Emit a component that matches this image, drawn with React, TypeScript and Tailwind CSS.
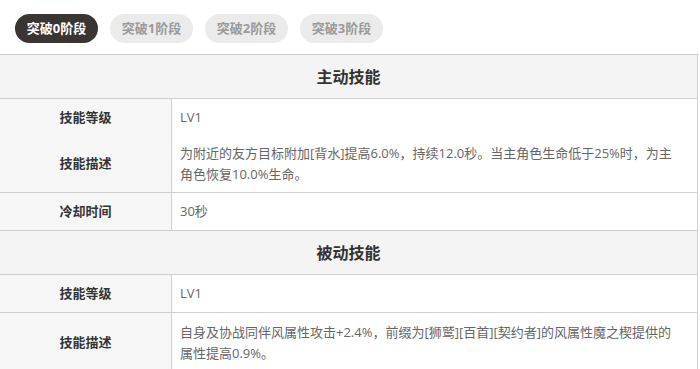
import { useState } from 'react';

const stages = ['突破0阶段', '突破1阶段', '突破2阶段', '突破3阶段'];

interface Row {
  label: string;
  lines: string[];
  border: boolean;
  h: string;
}

interface Section {
  title: string;
  rows: Row[];
}

const sections: Section[] = [
  {
    title: '主动技能',
    rows: [
      { label: '技能等级', lines: ['LV1'], border: false, h: 'h-[37px]' },
      {
        label: '技能描述',
        lines: ['为附近的友方目标附加[背水]提高6.0%，持续12.0秒。当主角色生命低于25%时，为主', '角色恢复10.0%生命。'],
        border: true,
        h: 'h-[57px]',
      },
      { label: '冷却时间', lines: ['30秒'], border: true, h: 'h-[38px]' },
    ],
  },
  {
    title: '被动技能',
    rows: [
      { label: '技能等级', lines: ['LV1'], border: true, h: 'h-[38px]' },
      {
        label: '技能描述',
        lines: ['自身及协战同伴风属性攻击+2.4%，前缀为[狮鹫][百首][契约者]的风属性魔之楔提供的', '属性提高0.9%。'],
        border: true,
        h: 'h-[61px]',
      },
    ],
  },
];

const App = () => {
  const [active, setActive] = useState(0);

  return (
    <div className="w-[700px] h-[369px] overflow-hidden bg-white font-['Open_Sans','Noto_Sans_CJK_SC',sans-serif]">
      <div className="flex gap-3 pl-[15px] pt-[14px] h-[54px]">
        {stages.map((s, i) => (
          <button
            key={s}
            onClick={() => setActive(i)}
            className={
              i === active
                ? 'w-[83px] h-[29px] rounded-full bg-[#3a3532] text-white text-[13px] font-bold'
                : 'w-[83px] h-[29px] rounded-full bg-[#ebebeb] text-[#9a9a9a] text-[13px] font-bold'
            }
          >
            {s}
          </button>
        ))}
      </div>

      <div className="w-[698px] border-t border-r border-[#cfcfcf]">
        {sections.map(sec => (
          <div key={sec.title}>
            <div className="h-[44px] flex items-center justify-center bg-[#f4f4f4] border-b border-[#cfcfcf] text-[16px] font-bold text-[#333]">
              {sec.title}
            </div>
            {sec.rows.map((r, i) => (
              <div key={i} className={`flex ${r.h} ${r.border ? 'border-b border-[#cfcfcf]' : ''}`}>
                <div className="w-[172px] shrink-0 flex items-center justify-center bg-[#f7f7f7] border-r border-[#cfcfcf] text-[13px] font-bold text-[#333]">
                  {r.label}
                </div>
                <div className="flex-1 flex flex-col justify-center pl-2 text-[13px] leading-[21px] text-[#666] whitespace-nowrap">
                  {r.lines.map((l, j) => (
                    <div key={j}>{l}</div>
                  ))}
                </div>
              </div>
            ))}
          </div>
        ))}
      </div>
    </div>
  );
};

export default App;
